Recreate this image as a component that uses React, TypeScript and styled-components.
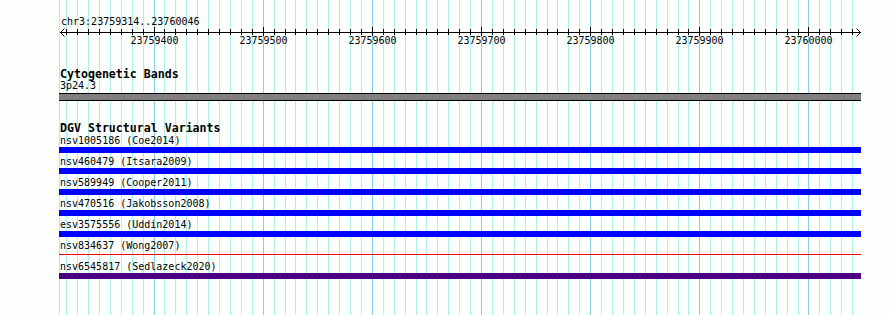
import React from "react";
import styled, { createGlobalStyle } from "styled-components";

const START = 23759314;
const END = 23760046;
// 23759400 sits at x=154, 600bp span 655px
const PX_PER_BP = 655 / 600;
const bpToX = (bp: number) => 154 + (bp - 23759400) * PX_PER_BP;

const ticks: number[] = [];
for (let bp = Math.ceil(START / 10) * 10; bp <= END; bp += 10) ticks.push(bp);

const features = [
  { name: "nsv1005186 (Coe2014)", color: "#0000ff" },
  { name: "nsv460479 (Itsara2009)", color: "#0000ff" },
  { name: "nsv589949 (Cooper2011)", color: "#0000ff" },
  { name: "nsv470516 (Jakobsson2008)", color: "#0000ff" },
  { name: "esv3575556 (Uddin2014)", color: "#0000ff" },
  { name: "nsv834637 (Wong2007)", color: "#ff0000", thin: true },
  { name: "nsv6545817 (Sedlazeck2020)", color: "#4b0082" },
];

const GlobalStyle = createGlobalStyle`
  html, body {
    margin: 0;
    padding: 0;
    background: #fdfffd;
  }
  body {
    width: 890px;
    height: 315px;
    overflow: hidden;
    color: #000;
    font-family: "DejaVu Sans Mono", "Liberation Mono", monospace;
  }
`;

const Page = styled.div`
  position: relative;
  width: 890px;
  height: 315px;
  overflow: hidden;
`;

const GridLayer = styled.svg`
  position: absolute;
  top: 0;
  left: 0;
  pointer-events: none;
`;

const Content = styled.div`
  position: relative;
  display: flex;
  flex-direction: column;
`;

const Location = styled.div`
  padding: 16px 0 0 61px;
  font-size: 10px;
  line-height: 11px;
`;

const RulerSvg = styled.svg`
  display: block;
`;

const Track = styled.section<{ $gap: number }>`
  margin-top: ${(p) => p.$gap}px;
  padding-left: 59px;
  width: 802px;
`;

const TrackTitle = styled.div`
  padding-left: 1px;
  font-size: 11.6px;
  font-weight: bold;
  line-height: 12px;
`;

const Label = styled.div`
  padding-left: 1px;
  font-size: 10px;
  line-height: 11px;
  white-space: nowrap;
`;

const Band = styled.div`
  margin-top: 2px;
  height: 6px;
  background: #808080;
  border-top: 1px solid #000;
  border-bottom: 1px solid #000;
`;

const FeatureList = styled.div`
  display: flex;
  flex-direction: column;
  padding-top: 1px;
`;

const Bar = styled.div<{ $color: string; $thin?: boolean }>`
  background: ${(p) => p.$color};
  height: ${(p) => (p.$thin ? 1 : 6)}px;
  margin: ${(p) => (p.$thin ? "3px 0 6px" : "1px 0 3px")};
`;

function Grid() {
  return (
    <GridLayer width={890} height={315}>
      <line x1={59.5} x2={59.5} y1={0} y2={315} stroke="#afeeee" />
      {ticks.map((bp) => {
        const x = Math.floor(bpToX(bp)) + 0.5;
        return (
          <line
            key={bp}
            x1={x}
            x2={x}
            y1={0}
            y2={315}
            stroke={bp % 100 === 0 ? "#87ceeb" : "#afeeee"}
          />
        );
      })}
    </GridLayer>
  );
}

function Ruler() {
  return (
    <RulerSvg width={890} height={20}>
      <line x1={60} x2={861} y1={5.5} y2={5.5} stroke="#000" />
      <polyline points="64.5,1.5 60.5,5.5 64.5,9.5" fill="none" stroke="#000" />
      <polyline points="856.5,1.5 860.5,5.5 856.5,9.5" fill="none" stroke="#000" />
      {ticks.map((bp) => {
        const x = Math.floor(bpToX(bp)) + 0.5;
        const major = bp % 100 === 0;
        return (
          <g key={bp}>
            <line x1={x} x2={x} y1={major ? 0 : 2} y2={major ? 9 : 8} stroke="#000" />
            {major && (
              <text
                x={x}
                y={17}
                textAnchor="middle"
                fontSize={10}
                fontFamily='"DejaVu Sans Mono", monospace'
              >
                {bp}
              </text>
            )}
          </g>
        );
      })}
    </RulerSvg>
  );
}

export default function App() {
  return (
    <Page>
      <GlobalStyle />
      <Grid />
      <Content>
        <Location>
          chr3:{START}..{END}
        </Location>
        <Ruler />
        <Track $gap={21}>
          <TrackTitle>Cytogenetic Bands</TrackTitle>
          <Label>3p24.3</Label>
          <Band />
        </Track>
        <Track $gap={21}>
          <TrackTitle>DGV Structural Variants</TrackTitle>
          <FeatureList>
            {features.map((f) => (
              <div key={f.name}>
                <Label>{f.name}</Label>
                <Bar $color={f.color} $thin={f.thin} />
              </div>
            ))}
          </FeatureList>
        </Track>
      </Content>
    </Page>
  );
}
